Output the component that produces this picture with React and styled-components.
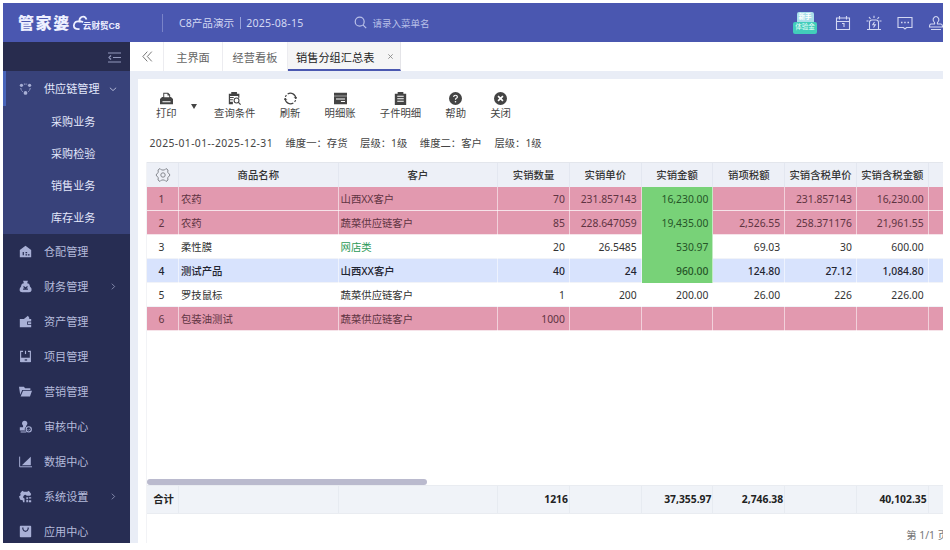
import styled, { createGlobalStyle, css } from "styled-components";

const GlobalStyle = createGlobalStyle`
  * {
    box-sizing: border-box;
  }
  body {
    margin: 0;
    padding: 3px;
    background: #fff;
    font-family: "Noto Sans", "Noto Sans CJK SC", sans-serif;
    font-size: 10.35px;
    color: #444;
    overflow: hidden;
  }
`;

const Frame = styled.div`
  width: 940px;
  height: 540px;
  display: flex;
  flex-direction: column;
  overflow: hidden;
  white-space: nowrap;
`;

const Header = styled.header`
  height: 39px;
  flex-shrink: 0;
  display: flex;
  align-items: center;
  background: #4a57b0;
  color: #d3d8f3;
`;
const Brand = styled.div`
  width: 160px;
  height: 18px;
  padding: 1px 0 0 15px;
  display: flex;
  align-items: center;
  border-right: 1px solid #7983c8;
  color: #eef0ff;
  strong {
    font-size: 16px;
    font-weight: 900;
    letter-spacing: 1.6px;
    line-height: 20px;
  }
  svg {
    margin-left: 1px;
  }
`;
const BrandSub = styled.span`
  font-size: 8.6px;
  font-weight: 700;
  line-height: 12px;
  margin: 6px 0 0 -8px;
  small {
    font-family: "Liberation Sans", sans-serif;
    font-size: 8.8px;
  }
`;
const Company = styled.div`
  margin-left: 16px;
  display: flex;
  align-items: center;
  line-height: 14px;
  font-size: 10.6px;
  span + span {
    margin-left: 6px;
    padding-left: 5px;
    border-left: 1px solid #98a1da;
    line-height: 12px;
    letter-spacing: 0.2px;
  }
`;
const Search = styled.div`
  margin-left: 51px;
  display: flex;
  align-items: center;
  gap: 5px;
  font-size: 9.5px;
  color: #b9c0e8;
`;
const HeaderIcons = styled.div`
  margin-left: auto;
  display: flex;
  align-items: center;
  gap: 15px;
`;

const Badge = styled.div`
  width: 24px;
  height: 22px;
  margin-right: 3px;
  display: flex;
  flex-direction: column;
  align-items: center;
  color: #e9fffb;
  font-size: 6.5px;
  line-height: 10px;
  b {
    width: 17px;
    height: 10px;
    background: #a9dfe9;
    color: #fff;
    border-radius: 2px 2px 0 0;
    text-align: center;
  }
  span {
    width: 24px;
    height: 12px;
    background: #42cdba;
    border-radius: 2px;
    text-align: center;
  }
`;

const Body = styled.div`
  flex: 1;
  min-height: 0;
  display: flex;
`;

const Sidebar = styled.nav`
  width: 127px;
  flex-shrink: 0;
  background: #272d53;
  color: #b5bbdb;
  font-size: 11.1px;
`;
const Collapse = styled.div`
  height: 29px;
  padding: 1px 9px 0 0;
  display: flex;
  align-items: center;
  justify-content: flex-end;
  background: #282c4e;
`;
const Group = styled.div`
  ${(p) =>
    p.$open &&
    css`
      background: #38427a;
      color: #e3e7fa;
    `}
`;
const MenuItem = styled.div`
  height: 35px;
  padding: 0 12px 0 13px;
  display: flex;
  align-items: center;
  border-left: 3px solid ${(p) => (p.$active ? "#4864b9" : "transparent")};
  & > svg:first-child {
    color: #a9b0d6;
  }
  span {
    flex: 1;
    margin-left: 12px;
    line-height: 16px;
  }
`;
const SubItem = styled.div`
  height: 32px;
  padding-left: 48px;
  line-height: 31px;
`;

const Main = styled.main`
  flex: 1;
  min-width: 0;
  display: flex;
  flex-direction: column;
  background: #e9edf6;
`;
const Tabs = styled.div`
  height: 29px;
  flex-shrink: 0;
  display: flex;
  background: #fff;
  font-size: 11.2px;
  color: #666;
`;
const Tab = styled.div`
  width: ${(p) => p.$width}px;
  display: flex;
  align-items: center;
  justify-content: center;
  border-right: 1px solid #ececf0;
  ${(p) =>
    p.$active &&
    css`
      justify-content: space-between;
      padding: 2px 6px 0 8px;
      background: #f5f5f6;
      border-right-color: #e4e4e8;
      border-bottom: 2px solid #4a57b0;
      color: #222;
    `}
`;

const Panel = styled.section`
  flex: 1;
  margin: 8px 0 0 8px;
  min-height: 0;
  display: flex;
  flex-direction: column;
  background: #fff;
`;
const Toolbar = styled.div`
  height: 52px;
  padding: 13px 0 0 18px;
  display: flex;
  gap: 24.2px;
`;
const Tool = styled.div`
  display: flex;
  flex-direction: column;
  align-items: center;
  color: #444;
  span {
    margin-top: 1px;
    line-height: 14px;
  }
`;
const Caret = styled.i`
  width: 0;
  height: 0;
  margin: 12px -7px 0 -10px;
  border: 3.5px solid transparent;
  border-top: 5px solid #444;
  border-bottom: 0;
`;
const Filters = styled.div`
  height: 31px;
  padding: 3px 0 0 11.5px;
  display: flex;
  gap: 12.5px;
  line-height: 18px;
  span:first-child {
    letter-spacing: 0.4px;
  }
`;

const Table = styled.div`
  flex: 1;
  margin-left: 8px;
  border-left: 1px solid #f2f3f6;
  display: flex;
  flex-direction: column;
`;
const rowColors = { pink: "#e299af", blue: "#d8e3fd", plain: "#fff" };
const textColors = { pink: "#5f3442", blue: "#1f2430", plain: "#333" };
const Row = styled.div`
  height: 24px;
  display: grid;
  grid-template-columns: 32px 159.6px 159.6px repeat(6, 71.75px) 1fr;
  background: ${(p) => rowColors[p.$tone]};
  color: ${(p) => textColors[p.$tone]};
  font-weight: ${(p) => (p.$tone === "blue" ? 500 : 400)};
  border-bottom: 1px solid ${(p) => (p.$tone === "pink" ? "#f6e3e9" : "#f1f3f8")};
  line-height: 24px;
`;
const Cell = styled.div`
  padding: 0 4px 0 2px;
  text-align: ${(p) => p.$align || "right"};
  border-right: 1px solid rgba(255, 255, 255, 0.55);
  ${(p) => p.$green && "background: #78d278; color: #265528;"}
  ${(p) => p.$link && "color: #2c9a57;"}
`;
const HeadRow = styled(Row)`
  height: 25px;
  background: #edf0f7;
  border-top: 1px solid #e3e6ec;
  border-bottom: 0;
  color: #333;
  font-weight: 500;
  ${Cell} {
    padding: 0;
    text-align: center;
    border-color: #e3e7f0;
  }
  svg {
    margin-top: 4px;
  }
`;
const Scrollbar = styled.div`
  width: 280px;
  height: 6px;
  margin-top: auto;
  border-radius: 3px;
  background: #babace;
`;
const TotalRow = styled(Row)`
  height: 29px;
  background: #f0f3f8;
  border-top: 1px solid #e9ecf1;
  border-bottom: 1px solid #e9ecf1;
  color: #222;
  font-weight: 700;
  line-height: 27px;
  ${Cell} {
    padding: 0 1px 0 0;
    border-color: #e7ebf1;
  }
  ${Cell}:first-child {
    padding-left: 3px;
  }
`;
const Pager = styled.div`
  height: 29px;
  display: flex;
  justify-content: flex-end;
  margin-right: -5px;
  padding-top: 12px;
  line-height: 18px;
  color: #777;
`;

const Icon = ({ size = 13, children }) => (
  <svg width={size} height={size} viewBox="0 0 16 16" fill="currentColor" stroke="none">
    {children}
  </svg>
);

const LineIcon = ({ size = 16, children }) => (
  <svg
    width={size}
    height={size}
    viewBox="0 0 16 16"
    fill="none"
    stroke="currentColor"
    strokeWidth="1.1"
  >
    {children}
  </svg>
);

const menuIcons = {
  chain: (
    <g>
      <circle cx="3" cy="4" r="2" />
      <circle cx="13" cy="4" r="2" />
      <circle cx="8" cy="13.5" r="2.3" />
      <path
        d="M6 2.6h4M2.2 7.5q.3 3 2.6 4.6M13.8 7.5q-.3 3-2.6 4.6"
        fill="none"
        stroke="currentColor"
        strokeWidth="1.2"
        strokeDasharray="2 1"
      />
    </g>
  ),
  warehouse: (
    <path
      fillRule="evenodd"
      d="M8 1 15 6v9H1V6zM4.500 8.500v4h1.500v-4zM8 8.500v1.500h2V8.500zm0 3v1.500h2v-1.500zm3 0v1.500h2v-1.500z"
    />
  ),
  money: (
    <path
      fillRule="evenodd"
      d="M5 1h6l-1 3q3 0 3.500 4 2.500 2 2 4.500-.5 2.500-3 2.500H4Q1 15 .7 12.500.5 10 2.500 8 3 4 6 4zM5.500 7v2L7 10.500H5V12h6v-1.500H9L10.500 9V7L8 9z"
    />
  ),
  asset: (
    <path
      fillRule="evenodd"
      d="M1 5h5l5-4 2 3-1 1h3v3h-5v4h5v3H1zM11 9h4v2h-4z"
    />
  ),
  project: (
    <g>
      <path d="M5 1.700H2V14h12V1.700h-3" fill="none" stroke="currentColor" strokeWidth="1.400" />
      <path d="M2 9.500h12V15H2z" />
      <path d="M7.300 1h1.400v4H7.300z" />
      <path d="M7 11.500h3V13H7z" fill="#272d53" />
    </g>
  ),
  folder: <path d="M0 2h6l1.500 2H14v2H4L1.500 12zM5 7h11l-2.500 7H2z" />,
  audit: (
    <g>
      <circle cx="7" cy="4" r="3.200" />
      <path d="M5 6h4l-.5 3H5zM1 9h7q-2 3 0 4H1zM2 14h7v1.500H2z" />
      <circle cx="12" cy="11.500" r="3.200" fill="none" stroke="currentColor" strokeWidth="1.400" />
      <path d="m10.500 11.500 1.200 1.200 2-2.200" fill="none" stroke="currentColor" />
    </g>
  ),
  chart: (
    <g>
      <path d="M.8 2v12.500H16" fill="none" stroke="currentColor" strokeWidth="1.200" />
      <path d="M3.500 12.500 14.500 2v10.500z" />
    </g>
  ),
  gear: (
    <g>
      <path
        fillRule="evenodd"
        d="m4 1 2 1h4l2-1 3 4-1 2h-4.500a2.300 2.300 0 1 0-2.700 3.500V15H5l-.5-2.500L1.500 12 0 8l2-1.500L1.500 4z"
      />
      <path d="M9 9h2v2H9zm3 0h3v1.500h-3zM9 12h2v3H9zm3 .5h3V15h-3z" />
    </g>
  ),
  app: (
    <path
      fillRule="evenodd"
      d="M2 1h12q1 0 1 1v12q0 1-1 1H2q-1 0-1-1V2q0-1 1-1zm2 2v2q1 3.500 4 3.500T12 5V3h-1.500v2Q10 7 8 7T5.500 5V3z"
    />
  ),
};

const toolIcons = {
  print: (
    <path
      fillRule="evenodd"
      d="M4 1h6l2.500 2.500V6h1L16 8.500V15H0V8.500L2.500 6H4zM5.200 2.200V6.500H11.300V4.200H9.200v-2zM3 11.300v1.400h10v-1.400z"
    />
  ),
  query: (
    <g>
      <path fillRule="evenodd" d="M1 2h3V0h7v2h3v5h-1.500V5h-10v1.200H7v1.300H2.500V9H6v1.300H2.500V12H6v3H1z" />
      <circle cx="10.500" cy="10.500" r="3" fill="none" stroke="currentColor" strokeWidth="1.300" />
      <path d="m12.500 12.500 3 3" stroke="currentColor" strokeWidth="1.400" />
    </g>
  ),
  refresh: (
    <g fill="none" stroke="currentColor" strokeWidth="1.500">
      <path d="M4.500 2.500A6.500 6.500 0 0 1 14.500 8M11.500 13.500A6.500 6.500 0 0 1 1.500 8M3 3.800A6.500 6.500 0 0 0 1.700 6M13 12.200A6.500 6.500 0 0 0 14.300 10" />
      <path d="m12.500 6.500 2 2 1.300-2.200M3.500 9.500 1.500 7.500.2 9.700" strokeWidth="1.200" />
    </g>
  ),
  ledger: (
    <path fillRule="evenodd" d="M0 1h16v3.500H0zM0 5.300h16V15H0zM2.500 8v1.200h11V8zm6 3.200v1.200h5v-1.200z" />
  ),
  detail: (
    <path
      fillRule="evenodd"
      d="M1 2h3.500V0h7v2H15v14H1zM4 4.500v1.200h8V4.500zm0 3.200v1.200h8V7.700zm0 3.200v1.200h8v-1.200z"
    />
  ),
  help: (
    <g>
      <circle cx="8" cy="8" r="8" />
      <path d="M5.700 6.200q.2-2.200 2.300-2.200t2.300 2q0 1-1.300 1.800-1 .6-1 1.700" fill="none" stroke="#fff" strokeWidth="1.500" />
      <circle cx="8" cy="12" r="1" fill="#fff" />
    </g>
  ),
  close: (
    <g>
      <circle cx="8" cy="8" r="8" />
      <path d="m5 5 6 6m0-6-6 6" stroke="#fff" strokeWidth="2" />
    </g>
  ),
};

const menu = [
  { icon: "warehouse", label: "仓配管理" },
  { icon: "money", label: "财务管理", more: true },
  { icon: "asset", label: "资产管理" },
  { icon: "project", label: "项目管理" },
  { icon: "folder", label: "营销管理" },
  { icon: "audit", label: "审核中心" },
  { icon: "chart", label: "数据中心" },
  { icon: "gear", label: "系统设置", more: true },
  { icon: "app", label: "应用中心" },
];
const subMenu = ["采购业务", "采购检验", "销售业务", "库存业务"];

const tools = [
  { icon: "query", label: "查询条件" },
  { icon: "refresh", label: "刷新" },
  { icon: "ledger", label: "明细账" },
  { icon: "detail", label: "子件明细" },
  { icon: "help", label: "帮助" },
  { icon: "close", label: "关闭" },
];

const filters = ["2025-01-01--2025-12-31", "维度一：存货", "层级：1级", "维度二：客户", "层级：1级"];

const columns = [
  "商品名称",
  "客户",
  "实销数量",
  "实销单价",
  "实销金额",
  "销项税额",
  "实销含税单价",
  "实销含税金额",
];

const rows = [
  { tone: "pink", green: true, cells: ["农药", "山西XX客户", "70", "231.857143", "16,230.00", "", "231.857143", "16,230.00"] },
  { tone: "pink", green: true, cells: ["农药", "蔬菜供应链客户", "85", "228.647059", "19,435.00", "2,526.55", "258.371176", "21,961.55"] },
  { tone: "plain", green: true, link: true, cells: ["柔性膜", "网店类", "20", "26.5485", "530.97", "69.03", "30", "600.00"] },
  { tone: "blue", green: true, cells: ["测试产品", "山西XX客户", "40", "24", "960.00", "124.80", "27.12", "1,084.80"] },
  { tone: "plain", cells: ["罗技鼠标", "蔬菜供应链客户", "1", "200", "200.00", "26.00", "226", "226.00"] },
  { tone: "pink", cells: ["包装油测试", "蔬菜供应链客户", "1000", "", "", "", "", ""] },
];
const totals = ["", "", "1216", "", "37,355.97", "2,746.38", "", "40,102.35"];

const TopBar = () => (
  <Header>
    <Brand>
      <strong>管家婆</strong>
      <svg width="19" height="18" viewBox="0 0 19 18" fill="none" stroke="currentColor" strokeWidth="1.8">
        <path d="M14.500 5.500Q13 1.500 9.500 3 7 4.500 7.500 7.500 2.500 6.500 1.800 11.500q0 4 5.700 3.500M7.500 7.500q2-.5 3.500.7" />
      </svg>
      <BrandSub>
        云财贸<small>C8</small>
      </BrandSub>
    </Brand>
    <Company>
      <span>C8产品演示</span>
      <span>2025-08-15</span>
    </Company>
    <Search>
      <LineIcon size={13}>
        <circle cx="7" cy="7" r="5.500" strokeWidth="1.500" />
        <path d="m11 11 4 4" strokeWidth="1.500" />
      </LineIcon>
      请录入菜单名
    </Search>
    <HeaderIcons>
      <Badge>
        <b>新手</b>
        <span>体验金</span>
      </Badge>
      <LineIcon>
        <path d="M1.500 3h13v11.500h-13zM1.500 6.500h13M4.500 1v3.500M11.500 1v3.500M7 8.500h2v3.500" />
      </LineIcon>
      <LineIcon>
        <path d="M3.500 14V7.500q0-2.500 2.500-2.500h4q2.500 0 2.500 2.500V14M1 14.500h14M8 .8v2.200M3 2l1.500 1.800M13 2l-1.500 1.800M.5 6h2M13.500 6h2M8.500 7 6.800 9.800h2.500L7.500 12.500" />
      </LineIcon>
      <LineIcon>
        <path d="M1 2.500h14v10H9.500L8 14l-1.500-1.500H1z" />
        <path d="M4 7.500h1.500M7.200 7.500h1.500M10.500 7.500H12" strokeWidth="1.400" />
      </LineIcon>
      <Clipped>
        <LineIcon>
          <path d="M6.500 9q.5-1.200-.7-2.500Q4.700 5 5.500 3.300 6.500 1.500 8 1.500t2.500 1.800q.8 1.700-.3 3.200Q9 7.800 9.500 9H13q1.500 0 1.500 3h-13q0-3 1.500-3zM3 14.500h10" />
        </LineIcon>
      </Clipped>
    </HeaderIcons>
  </Header>
);

// last header icon runs past the right edge of the window
const Clipped = styled.div`
  width: 16px;
  height: 16px;
  margin-right: -1px;
`;

const SideMenu = () => (
  <Sidebar>
    <Collapse>
      <svg width="13" height="11" viewBox="0 0 13 11" fill="none" stroke="#9298bb" strokeWidth="1.2">
        <path d="M0 1h13M5 5.500h8M0 10h13M3 3.500 1 5.500l2 2" />
      </svg>
    </Collapse>
    <Group $open>
      <MenuItem $active>
        <Icon>{menuIcons.chain}</Icon>
        <span>供应链管理</span>
        <LineIcon size={10}>
          <path d="m3 6 5 4.500L13 6" />
        </LineIcon>
      </MenuItem>
      {subMenu.map((label) => (
        <SubItem key={label}>{label}</SubItem>
      ))}
    </Group>
    <Group>
      {menu.map((item) => (
        <MenuItem key={item.label}>
          <Icon>{menuIcons[item.icon]}</Icon>
          <span>{item.label}</span>
          {item.more && (
            <LineIcon size={9}>
              <path d="m5 3 5 5-5 5" />
            </LineIcon>
          )}
        </MenuItem>
      ))}
    </Group>
  </Sidebar>
);

const ReportTable = () => (
  <Table>
    <HeadRow>
      <Cell>
        <svg width="16" height="16" viewBox="0 0 16 16" fill="none" stroke="#85888f">
          <path d="M5 1.500 6.500 3h3L11 1.500 13 3l-.3 2.200L15 8l-2.300 2.800L13 13l-2 1.500L9.500 13h-3L5 14.500 3 13l.3-2.200L1 8l2.300-2.800L3 3z" />
          <circle cx="8" cy="8" r="2.200" />
        </svg>
      </Cell>
      {columns.map((name) => (
        <Cell key={name}>{name}</Cell>
      ))}
    </HeadRow>
    {rows.map((row, i) => (
      <Row key={i} $tone={row.tone}>
        <Cell $align="center">{i + 1}</Cell>
        {row.cells.map((value, c) => (
          <Cell
            key={c}
            $align={c < 2 ? "left" : "right"}
            $green={row.green && c === 4}
            $link={row.link && c === 1}
          >
            {value}
          </Cell>
        ))}
      </Row>
    ))}
    <Scrollbar />
    <TotalRow>
      <Cell $align="center">合计</Cell>
      {totals.map((value, c) => (
        <Cell key={c}>{value}</Cell>
      ))}
    </TotalRow>
    <Pager>第 1/1 页</Pager>
  </Table>
);

export default function App() {
  return (
    <Frame>
      <GlobalStyle />
      <TopBar />
      <Body>
        <SideMenu />
        <Main>
          <Tabs>
            <Tab $width={34}>
              <LineIcon size={13}>
                <path d="M9 2 3.500 8 9 14M14.500 2 9 8l5.500 6" />
              </LineIcon>
            </Tab>
            <Tab $width={59}>主界面</Tab>
            <Tab $width={65}>经营看板</Tab>
            <Tab $width={113} $active>
              销售分组汇总表
              <LineIcon size={7}>
                <path d="m3 3 10 10m0-10L3 13" stroke="#888" strokeWidth="2" />
              </LineIcon>
            </Tab>
          </Tabs>
          <Panel>
            <Toolbar>
              <Tool>
                <Icon>{toolIcons.print}</Icon>
                <span>打印</span>
              </Tool>
              <Caret />
              {tools.map((tool) => (
                <Tool key={tool.label}>
                  <Icon>{toolIcons[tool.icon]}</Icon>
                  <span>{tool.label}</span>
                </Tool>
              ))}
            </Toolbar>
            <Filters>
              {filters.map((text, i) => (
                <span key={i}>{text}</span>
              ))}
            </Filters>
            <ReportTable />
          </Panel>
        </Main>
      </Body>
    </Frame>
  );
}
